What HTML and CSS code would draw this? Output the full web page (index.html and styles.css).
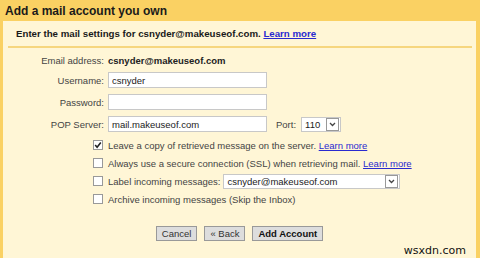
FILE: index.html
```html
<!DOCTYPE html>
<html lang="en">
<head>
    <meta charset="UTF-8">
    <title>Add a mail account you own</title>
    <link rel="stylesheet" href="styles.css">
</head>
<body>
    <div class="frame">
        <h2 class="title">Add a mail account you own</h2>
        <div class="panel">
            <p class="intro">Enter the mail settings for csnyder@makeuseof.com. <a href="#">Learn more</a></p>

            <div class="fields">
                <span class="label">Email address:</span>
                <span class="value">csnyder@makeuseof.com</span>

                <label class="label" for="user">Username:</label>
                <input class="text" type="text" id="user" value="csnyder">

                <label class="label" for="pass">Password:</label>
                <input class="text" type="password" id="pass">

                <label class="label" for="pop">POP Server:</label>
                <div class="inline">
                    <input class="text" type="text" id="pop" value="mail.makeuseof.com">
                    <label class="port-label" for="port">Port:</label>
                    <div class="fake-select port">
                        <span>110</span>
                        <span class="arrow"><svg width="7" height="5" viewBox="0 0 7 5"><path d="M1 1 L3.5 3.5 L6 1" fill="none" stroke="#444" stroke-width="1.3"/></svg></span>
                    </div>
                </div>
            </div>

            <div class="options">
                <div class="option">
                    <span class="box"><svg width="8" height="8" viewBox="0 0 8 8"><path d="M1.2 4 L3.1 6.2 L6.8 1.5" fill="none" stroke="#222" stroke-width="1.6"/></svg></span>
                    <span>Leave a copy of retrieved message on the server. <a href="#">Learn more</a></span>
                </div>
                <div class="option">
                    <span class="box"></span>
                    <span>Always use a secure connection (SSL) when retrieving mail. <a href="#">Learn more</a></span>
                </div>
                <div class="option">
                    <span class="box"></span>
                    <span>Label incoming messages:</span>
                    <div class="fake-select label-select">
                        <span>csnyder@makeuseof.com</span>
                        <span class="arrow"><svg width="7" height="5" viewBox="0 0 7 5"><path d="M1 1 L3.5 3.5 L6 1" fill="none" stroke="#444" stroke-width="1.3"/></svg></span>
                    </div>
                </div>
                <div class="option">
                    <span class="box"></span>
                    <span>Archive incoming messages (Skip the Inbox)</span>
                </div>
            </div>

            <div class="buttons">
                <button class="btn">Cancel</button>
                <button class="btn">&laquo; Back</button>
                <button class="btn primary">Add Account</button>
            </div>

            <div class="watermark">wsxdn.com</div>
        </div>
    </div>
</body>
</html>
```

FILE: styles.css
```css
body {
    margin: 0;
    padding: 0;
    background-color: #fad163;
    font-family: "Liberation Sans", Arial, sans-serif;
    font-size: 9.5px;
    color: #444;
    height: 258px;
    overflow: hidden;
}

.frame {
    padding: 0 4px 0 3px;
    height: 258px;
    display: flex;
    flex-direction: column;
}

.title {
    margin: 0;
    height: 21px;
    line-height: 23px;
    padding-left: 2px;
    font-size: 12px;
    font-weight: bold;
    color: #1a1a1a;
}

.panel {
    flex: 1;
    background-color: #fff6d6;
    position: relative;
}

a {
    color: #2a2ad0;
    text-decoration: underline;
}

.intro {
    margin: 0 4px 0 5px;
    padding: 7px 8px 7px 8px;
    border-bottom: 2px solid #f6d67e;
    font-size: 9.7px;
    font-weight: bold;
    color: #1a1a1a;
}

.fields {
    display: grid;
    grid-template-columns: 101px auto;
    column-gap: 4px;
    row-gap: 6px;
    align-items: center;
    margin-top: 7px;
}

.label {
    text-align: right;
}

.value {
    font-weight: bold;
    color: #222;
}

.text {
    width: 159px;
    height: 16px;
    box-sizing: border-box;
    border: 1px solid #c8c8c8;
    background: #fff;
    font-family: inherit;
    font-size: 9.5px;
    color: #222;
    padding: 0 3px;
    margin: 0;
}

.inline {
    display: flex;
    align-items: center;
}

.port-label {
    margin-left: 9px;
    margin-right: 5px;
}

.fake-select {
    display: flex;
    align-items: center;
    justify-content: space-between;
    height: 15px;
    box-sizing: border-box;
    border: 1px solid #c8c8c8;
    background: #fff;
    font-size: 9.5px;
    color: #222;
    padding-left: 3px;
}

.fake-select .arrow {
    display: flex;
    align-items: center;
    justify-content: center;
    width: 11px;
    height: 11px;
    margin-right: 1px;
    border: 1px solid #999;
    background: #fff;
}

.port {
    width: 40px;
}

.label-select {
    width: 177px;
    margin-left: 3px;
}

.options {
    margin-top: 6px;
    padding-left: 90px;
    display: flex;
    flex-direction: column;
    gap: 4px;
}

.option {
    display: flex;
    align-items: center;
    height: 14px;
}

.box {
    width: 8px;
    height: 8px;
    border: 1px solid #999;
    background: #fff;
    margin-right: 5px;
    display: flex;
    align-items: center;
    justify-content: center;
}

.buttons {
    display: flex;
    justify-content: center;
    gap: 7px;
    margin-top: 20px;
}

.btn {
    height: 15px;
    padding: 0 5px;
    border: 1px solid #999;
    background: #ddd;
    font-family: inherit;
    font-size: 9.5px;
    color: #333;
    line-height: 13px;
}

.primary {
    font-weight: bold;
    color: #111;
}

.watermark {
    position: absolute;
    right: 10px;
    bottom: 1px;
    font-family: "DejaVu Sans", sans-serif;
    font-size: 11px;
    color: #111;
}
```
